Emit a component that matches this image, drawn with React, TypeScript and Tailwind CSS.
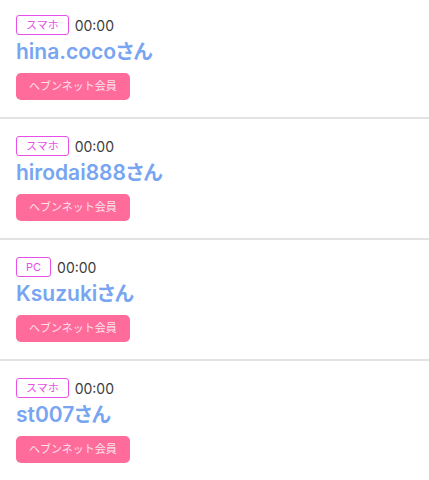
const users = [
  { name: "hina.coco", device: "スマホ", time: "00:00" },
  { name: "hirodai888", device: "スマホ", time: "00:00" },
  { name: "Ksuzuki", device: "PC", time: "00:00" },
  { name: "st007", device: "スマホ", time: "00:00" },
];

export default function App() {
  return (
    <div
      className="min-h-[480px] w-full bg-white"
      style={{ fontFamily: 'Inter, "Noto Sans CJK JP", sans-serif' }}
    >
      <ul>
        {users.map((user, i) => (
          <li
            key={user.name}
            className={
              i === 0
                ? "border-b-2 border-[#e2e2e2] px-4 pb-[17px] pt-[15px]"
                : i === users.length - 1
                  ? "px-4 pb-[17px] pt-[17px]"
                  : "border-b-2 border-[#e2e2e2] px-4 pb-[17px] pt-[17px]"
            }
          >
            <div className="flex h-5 items-center gap-[6px]">
              <span className="flex h-5 items-center rounded-[3px] border border-[#e84ee8] px-[9px] text-[11px] leading-none text-[#e84ee8]">
                {user.device}
              </span>
              <span className="text-[14px] text-[#3c3c3c]">{user.time}</span>
            </div>
            <p className="mt-[3px] text-[21px] font-semibold leading-[28px] text-[#78a5f2] [font-feature-settings:'palt']">
              {user.name}
              <span className="text-[20px]">さん</span>
            </p>
            <button
              type="button"
              className="mt-[7px] flex h-[27px] items-center rounded-[5px] bg-[#ff6b9b] px-[13px] text-[11px] text-[#fde2ec]"
            >
              ヘブンネット会員
            </button>
          </li>
        ))}
      </ul>
    </div>
  );
}
